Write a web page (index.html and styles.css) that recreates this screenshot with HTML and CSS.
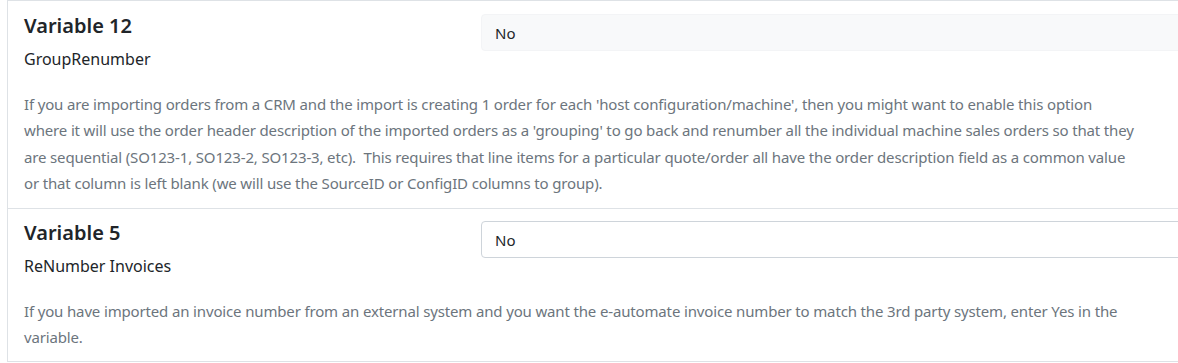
FILE: index.html
```html
<!DOCTYPE html>
<html lang="en">
<head>
  <meta charset="UTF-8" />
  <title>Variables</title>
  <link rel="stylesheet" href="styles.css">
</head>
<body>
  <div class="var-list">

    <div class="var-card">
      <div class="var-row">
        <div class="var-label">
          <h5 class="var-title">Variable 12</h5>
          <div class="var-name">GroupRenumber</div>
        </div>
        <div class="var-value">
          <input class="var-input readonly" type="text" value="No" readonly>
        </div>
      </div>
      <p class="var-desc">If you are importing orders from a CRM and the import is creating 1 order for each 'host configuration/machine', then you might want to enable this option where it will use the order header description of the imported orders as a 'grouping' to go back and renumber all the individual machine sales orders so that they are sequential (SO123-1, SO123-2, SO123-3, etc).&nbsp; This requires that line items for a particular quote/order all have the order description field as a common value or that column is left blank (we will use the SourceID or ConfigID columns to group).</p>
    </div>

    <div class="var-card">
      <div class="var-row">
        <div class="var-label">
          <h5 class="var-title">Variable 5</h5>
          <div class="var-name">ReNumber Invoices</div>
        </div>
        <div class="var-value">
          <input class="var-input" type="text" value="No">
        </div>
      </div>
      <p class="var-desc">If you have imported an invoice number from an external system and you want the e-automate invoice number to match the 3rd party system, enter Yes in the variable.</p>
    </div>

  </div>
</body>
</html>
```

FILE: styles.css
```css
* {
  box-sizing: border-box;
}

html, body {
  margin: 0;
  overflow: hidden;
  background: #fff;
}

body {
  padding-left: 7px;
  font-family: 'Noto Sans', 'Open Sans', sans-serif;
  color: #212529;
}

.var-list {
  width: 1240px;
}

.var-card {
  border: 1px solid #dee2e6;
  padding: 13px 16px 12px;
}

.var-card + .var-card {
  margin-top: -1px;
  padding-top: 12px;
  padding-bottom: 10px;
}

.var-row {
  display: grid;
  grid-template-columns: 457px 1fr;
}

.var-title {
  margin: 0 0 9px;
  font-size: 20px;
  line-height: 24px;
  font-weight: 600;
  color: #212529;
}

.var-name {
  font-size: 16px;
  line-height: 24px;
}

.var-input {
  display: block;
  width: 100%;
  height: 37px;
  padding: 0 13px;
  border: 1px solid #ced4da;
  border-radius: 4px;
  font-family: inherit;
  font-size: 15px;
  color: #212529;
  background: #fff;
  outline: none;
}

.var-input.readonly {
  background: #f8f9fa;
  border-color: #f3f4f6;
}

.var-desc {
  margin: 20px 0 0;
  max-width: 1110px;
  font-size: 15px;
  line-height: 26.3px;
  letter-spacing: -0.15px;
  color: #6c757d;
}
```
